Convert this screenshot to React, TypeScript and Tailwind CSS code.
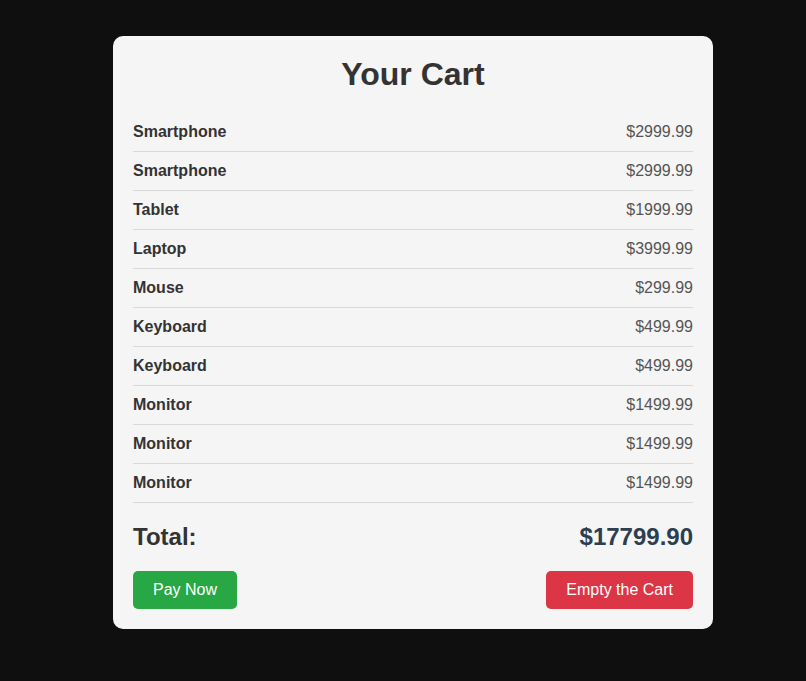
const items = [
  { name: "Smartphone", price: 2999.99 },
  { name: "Smartphone", price: 2999.99 },
  { name: "Tablet", price: 1999.99 },
  { name: "Laptop", price: 3999.99 },
  { name: "Mouse", price: 299.99 },
  { name: "Keyboard", price: 499.99 },
  { name: "Keyboard", price: 499.99 },
  { name: "Monitor", price: 1499.99 },
  { name: "Monitor", price: 1499.99 },
  { name: "Monitor", price: 1499.99 },
];

export default function App() {
  const total = items.reduce((sum, i) => sum + i.price, 0);
  return (
    <div
      className="flex min-h-[681px] justify-center bg-[#0f0f0f] pl-[20px] pt-[36px]"
      style={{ fontFamily: '"Liberation Sans", Arial, sans-serif' }}
    >
      <div className="h-fit w-[600px] rounded-[10px] bg-[#f5f5f5] p-5">
        <h2 className="mb-5 text-center text-[32px] font-bold leading-[37px] text-[#333]">
          Your Cart
        </h2>
        <ul>
          {items.map((item, idx) => (
            <li
              key={idx}
              className="flex justify-between border-b border-[#d9d9d9] py-[10px] text-base leading-[18px]"
            >
              <span className="font-bold text-[#333]">{item.name}</span>
              <span className="text-[#555]">${item.price.toFixed(2)}</span>
            </li>
          ))}
        </ul>
        <div className="mt-5 flex justify-between text-2xl font-bold leading-[28px]">
          <span className="text-[#333]">Total:</span>
          <span className="text-[#2c3e50]">${total.toFixed(2)}</span>
        </div>
        <div className="mt-5 flex justify-between">
          <button className="rounded-[5px] bg-[#28a745] px-5 py-[10px] text-base leading-[18px] text-white">
            Pay Now
          </button>
          <button className="rounded-[5px] bg-[#dc3545] px-5 py-[10px] text-base leading-[18px] text-white">
            Empty the Cart
          </button>
        </div>
      </div>
    </div>
  );
}
